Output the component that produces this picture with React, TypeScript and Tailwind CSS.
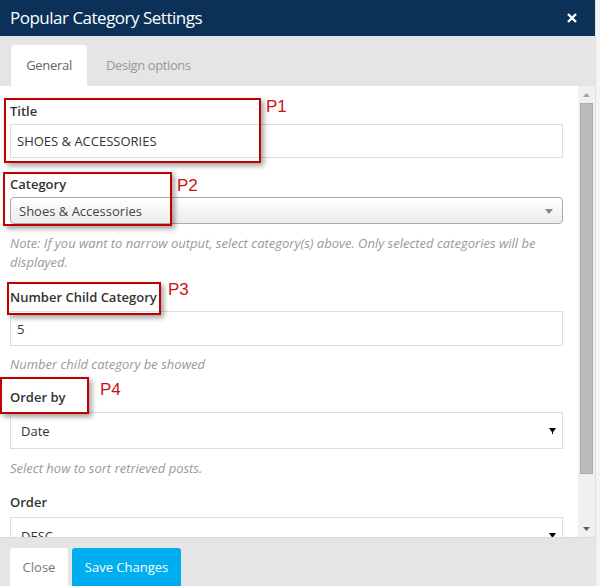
import React from "react";

function Annot({ box, label, labelPos }: { box: string; label: string; labelPos: string }) {
  return (
    <>
      <div className={`absolute border-2 border-[#c00000] shadow-[3px_3px_5px_rgba(0,0,0,0.35)] ${box}`} />
      <div className={`absolute font-['Liberation_Sans',Arial,sans-serif] text-[17px] leading-none text-[#cc1111] ${labelPos}`}>
        {label}
      </div>
    </>
  );
}

function Caret({ className = "" }: { className?: string }) {
  return (
    <svg width="7" height="6" viewBox="0 0 7 6" className={className}>
      <polygon points="0,0 7,0 3.5,5" fill="currentColor" />
      <rect x="3" y="4" width="1" height="2" fill="currentColor" />
    </svg>
  );
}

export default function App() {
  return (
    <div className="w-[600px] h-[586px] flex bg-[#f2f2f2] font-['Open_Sans',sans-serif] overflow-hidden">
      <div className="w-[595px] h-full flex flex-col">
        {/* Header */}
        <div className="h-[36px] shrink-0 bg-[#0b3158] flex items-center justify-between pl-[10px] pr-[18px]">
          <span className="text-white text-[17px] tracking-[-0.5px] leading-none pb-[2px]">
            Popular Category Settings
          </span>
          <svg width="10" height="10" viewBox="0 0 10 10">
            <path d="M1 1 L9 9 M9 1 L1 9" stroke="white" strokeWidth="2.4" />
          </svg>
        </div>

        {/* Tabs */}
        <div className="h-[50px] shrink-0 bg-[#e5e5e5] flex items-end pl-[11px] gap-[3px]">
          <div className="h-[41px] w-[76px] bg-white rounded-t-[4px] flex items-center justify-center text-[13px] tracking-[-0.3px] text-[#666]">
            General
          </div>
          <div className="h-[41px] px-[16px] flex items-center text-[13px] tracking-[-0.4px] text-[#999]">
            Design options
          </div>
        </div>

        {/* Body */}
        <div className="flex-1 flex min-h-0">
          <div className="relative flex-1 bg-white overflow-hidden pt-[16px] pl-[10px] pr-[15px] text-[13px] text-[#333]">
            <div className="h-[18px] leading-[18px] font-semibold">Title</div>
            <div className="mt-[4px] h-[34px] border border-[#ddd] flex items-center pl-[6px] pt-[2px]">
              SHOES &amp; ACCESSORIES
            </div>

            <div className="mt-[17px] h-[18px] leading-[18px] font-semibold">Category</div>
            <div className="mt-[4px] h-[27px] border border-[#aaa] rounded-[4px] bg-gradient-to-b from-white to-[#ececec] flex items-center justify-between pl-[8px] pr-[9px] pt-[2px] text-[#444]">
              <span>Shoes &amp; Accessories</span>
              <svg width="8" height="5" viewBox="0 0 8 5">
                <polygon points="0,0 8,0 4,5" fill="#888" />
              </svg>
            </div>

            <div className="mt-[10px] text-[13px] leading-[19px] italic text-[#999] pr-[10px]">
              Note: If you want to narrow output, select category(s) above. Only selected categories will be displayed.
            </div>

            <div className="mt-[16px] h-[18px] leading-[18px] font-semibold">Number Child Category</div>
            <div className="mt-[5px] h-[35px] border border-[#ddd] flex items-center pl-[6px] pt-[2px]">5</div>
            <div className="mt-[9px] text-[13px] leading-[19px] italic text-[#999]">
              Number child category be showed
            </div>

            <div className="mt-[14px] h-[18px] leading-[18px] font-semibold">Order by</div>
            <div className="mt-[6px] h-[37px] border border-[#ddd] flex items-center justify-between pl-[10px] pr-[6px] pt-[2px]">
              <span>Date</span>
              <Caret className="text-black -mt-[2px]" />
            </div>
            <div className="mt-[10px] text-[13px] leading-[19px] italic text-[#999]">
              Select how to sort retrieved posts.
            </div>

            <div className="mt-[15px] h-[18px] leading-[18px] font-semibold">Order</div>
            <div className="mt-[6px] h-[37px] border border-[#ddd] flex items-center justify-between pl-[10px] pr-[6px] pt-[2px]">
              <span>DESC</span>
              <Caret className="text-black -mt-[2px]" />
            </div>

            {/* annotation boxes */}
            <Annot box="left-[4px] top-[12px] w-[257px] h-[65px]" label="P1" labelPos="left-[266px] top-[12px]" />
            <Annot box="left-[3px] top-[86px] w-[169px] h-[54px]" label="P2" labelPos="left-[177px] top-[91px]" />
            <Annot box="left-[7px] top-[196px] w-[154px] h-[33px]" label="P3" labelPos="left-[168px] top-[195px]" />
            <Annot box="left-[0px] top-[291px] w-[89px] h-[37px]" label="P4" labelPos="left-[100px] top-[295px]" />
          </div>

          {/* scrollbar */}
          <div className="w-[17px] shrink-0 bg-[#f0f0f0] flex flex-col">
            <div className="h-[17px] flex items-center justify-center">
              <svg width="7" height="4" viewBox="0 0 7 4">
                <polygon points="0,4 7,4 3.5,0" fill="#a3a3a3" />
              </svg>
            </div>
            <div className="ml-[2px] w-[13px] h-[371px] bg-[#bcbcbc] border border-[#aaa]" />
            <div className="flex-1" />
            <div className="h-[17px] flex items-center justify-center">
              <svg width="7" height="4" viewBox="0 0 7 4">
                <polygon points="0,0 7,0 3.5,4" fill="#606060" />
              </svg>
            </div>
          </div>
        </div>

        {/* Footer */}
        <div className="h-[49px] shrink-0 bg-[#e5e5e5] border-t border-[#d9d9d9] flex items-start gap-[4px] pl-[10px] pt-[10px] overflow-hidden">
          <div className="h-[40px] w-[58px] bg-white rounded-t-[3px] flex items-center justify-center text-[13px] text-[#777]">
            Close
          </div>
          <div className="h-[40px] w-[109px] bg-[#00aeef] rounded-t-[3px] flex items-center justify-center text-[13px] text-white">
            Save Changes
          </div>
        </div>
      </div>
      <div className="flex-1 h-full bg-[#f4f4f4] border-l border-[#e0e0e0]" />
    </div>
  );
}
